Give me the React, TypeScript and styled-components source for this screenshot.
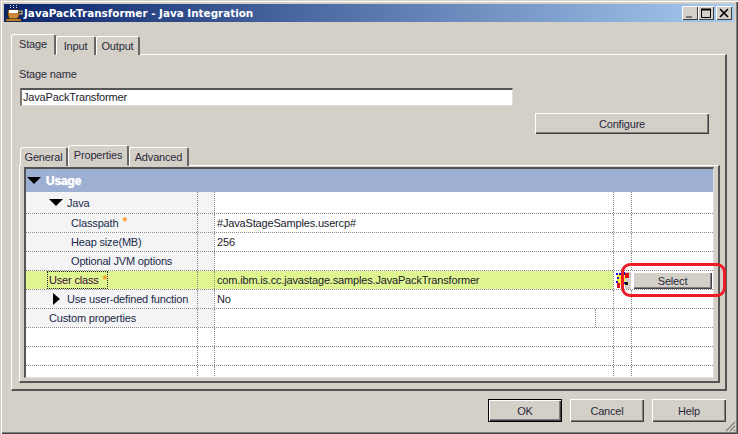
import React from 'react'
import styled, { createGlobalStyle } from 'styled-components'

const Global = createGlobalStyle`
  html, body { margin: 0; padding: 0; background: #d4d0c8; }
  * { box-sizing: border-box; }
`

const Window = styled.div`
  position: relative;
  width: 738px;
  height: 434px;
  overflow: hidden;
  display: flex;
  flex-direction: column;
  background: #d4d0c8;
  padding: 4px 4px 0 4px;
  box-shadow: inset 1px 1px 0 #d4d0c8, inset 2px 2px 0 #fff, inset -1px -1px 0 #404040, inset -2px -2px 0 #808080;
  font-family: 'Liberation Sans', Arial, sans-serif;
  font-size: 11px;
  letter-spacing: -0.17px;
  color: #1a1a2a;
`

const TitleBar = styled.div`
  height: 18px;
  flex: none;
  display: flex;
  align-items: center;
  padding: 0 2px 0 1px;
  background: linear-gradient(90deg, #0a246a, #a6caf0);
`

const Title = styled.div`
  margin-left: 1px;
  flex: 1;
  font-family: 'DejaVu Sans', sans-serif;
  font-size: 10.4px;
  font-weight: 700;
  letter-spacing: 0;
  color: #fff;
  white-space: nowrap;
`

const CaptionButton = styled.div<{ $gap?: number }>`
  width: 16px;
  height: 14px;
  margin-left: ${p => p.$gap ?? 0}px;
  background: #d4d0c8;
  box-shadow: inset 1px 1px 0 #fff, inset -1px -1px 0 #404040;
  display: flex;
  align-items: center;
  justify-content: center;
`

const Body = styled.div`
  flex: 1;
  display: flex;
  flex-direction: column;
  padding: 12px 7px 0 7px;
`

const TabStrip = styled.div<{ $left: number }>`
  display: flex;
  align-items: flex-end;
  padding-left: ${p => p.$left}px;
  position: relative;
  z-index: 1;
  margin-bottom: -1px;
`

const Tab = styled.div<{ $active?: boolean; $width: number }>`
  width: ${p => p.$width}px;
  height: ${p => (p.$active ? 21 : 19)}px;
  padding-top: 2px;
  text-align: center;
  line-height: 14px;
  background: #d4d0c8;
  border-top: 1px solid #fff;
  border-left: 1px solid #fff;
  border-right: 2px solid #666;
  border-radius: 3px 3px 0 0;
  border-bottom: ${p => (p.$active ? '1px solid #d4d0c8' : '0')};
  white-space: nowrap;
  color: #2a2a3a;
`

const Panel = styled.div`
  background: #d4d0c8;
  border-top: 1px solid #fff;
  border-left: 1px solid #fff;
  border-right: 2px solid #555;
  border-bottom: 2px solid #555;
`

const OuterPanel = styled(Panel)`
  height: 337px;
  display: flex;
  flex-direction: column;
  padding: 12px 0 0 7px;
`

const FieldLabel = styled.div`
  height: 14px;
  line-height: 14px;
  color: #2a2a3a;
`

const NameInput = styled.div`
  width: 493px;
  height: 18px;
  margin: 7px 0 0 1px;
  padding: 1px 0 0 1px;
  background: #fff;
  border-top: 2px solid #555;
  border-left: 2px solid #777;
  border-right: 1px solid #ddd;
  border-bottom: 1px solid #ddd;
  line-height: 13px;
  color: #1a1a2a;
`

const ConfigureRow = styled.div`
  display: flex;
  justify-content: flex-end;
  padding-right: 16px;
  margin-top: 7px;
  margin-bottom: 11px;
`

const PushButton = styled.div<{ $width: number; $height?: number; $default?: boolean }>`
  width: ${p => p.$width}px;
  height: ${p => p.$height ?? 23}px;
  display: flex;
  align-items: center;
  justify-content: center;
  background: #d4d0c8;
  color: #2a2a3a;
  border: ${p => (p.$default ? '1px solid #000' : '0')};
  box-shadow: inset 1px 1px 0 #fff, inset -1px -1px 0 #404040, inset -2px -2px 0 #808080;
`

const InnerPanel = styled(Panel)`
  height: 218px;
  margin-right: 5px;
  padding: 1px 4px 0 4px;
`

const Grid = styled.div`
  height: 211px;
  background: #fff;
  border-top: 2px solid #555;
  border-left: 2px solid #555;
  border-right: 1px solid #ddd;
  border-bottom: 1px solid #ddd;
  overflow: hidden;
`

const GroupHeader = styled.div`
  height: 23px;
  display: flex;
  align-items: center;
  padding-left: 1px;
  background: #9db0d3;
  color: #fff;
  font-weight: 700;
  font-size: 12px;
  text-shadow: 0 0 1px #fff;
`

const Row = styled.div<{ $height?: number; $open?: boolean }>`
  display: grid;
  grid-template-columns: 171px 17px 399px 18px 1fr;
  height: ${p => p.$height ?? 19}px;
  border-bottom: ${p => (p.$open ? '0' : '1px dotted #888')};
`

const NameCell = styled.div<{ $indent: number; $band?: string }>`
  display: flex;
  align-items: center;
  padding-left: ${p => p.$indent}px;
  background: ${p => p.$band ?? '#f4f4f4'};
  white-space: nowrap;
  color: #1a2a4a;
`

const GapCell = styled.div<{ $band?: string }>`
  border-left: 1px dotted #888;
  background: ${p => p.$band ?? '#f4f4f4'};
`

const ValueCell = styled.div<{ $band?: string }>`
  display: flex;
  align-items: center;
  padding-left: 2px;
  border-left: 1px dotted #888;
  background: ${p => p.$band ?? 'transparent'};
  white-space: nowrap;
  color: #1a1a2a;
`

const SplitValueCell = styled(ValueCell)`
  justify-content: flex-end;
  padding-right: 17px;
`

const InnerDivider = styled.div`
  width: 1px;
  height: 100%;
  border-left: 1px dotted #888;
`

const PlainCell = styled.div`
  border-left: 1px dotted #888;
`

const FocusLabel = styled.div`
  width: 61px;
  height: 100%;
  display: flex;
  align-items: center;
  padding-left: 1px;
  border: 1px dotted #222;
  color: #3a0a3a;
`

const Required = styled.span`
  color: #f59a20;
  font-size: 12px;
  font-weight: 700;
  margin-left: 4px;
  line-height: 1;
  align-self: flex-start;
  margin-top: 2px;
`

const ArrowDown = styled.span<{ $gap: number }>`
  width: 0;
  height: 0;
  border-left: 7px solid transparent;
  border-right: 7px solid transparent;
  border-top: 7px solid #000;
  margin-right: ${p => p.$gap}px;
`

const ArrowRight = styled.span`
  width: 0;
  height: 0;
  border-top: 6px solid transparent;
  border-bottom: 6px solid transparent;
  border-left: 7px solid #000;
  margin-right: 7px;
`

const SelectCell = styled.div`
  padding: 1px 0 0 2px;
  background: #fff;
`

const Footer = styled.div`
  display: flex;
  justify-content: flex-end;
  gap: 8px;
  margin-top: 8px;
  padding-right: 1px;
`

const Callout = styled.div`
  position: absolute;
  left: 621px;
  top: 263px;
  width: 105px;
  height: 34px;
  border: 3px solid #ed1c24;
  border-radius: 9px;
  pointer-events: none;
`

const Grip = styled.svg`
  position: absolute;
  right: 2px;
  bottom: 2px;
`

const WarnIcon = styled.svg`
  position: absolute;
  left: 616px;
  top: 271px;
`

const CoffeeIcon = () => (
  <svg width="18" height="18" viewBox="0 0 18 18">
    <path d="M5 1h1v1H5zM8 1h1v1H8zM11 1h1v1h-1zM5 3h1v1H5zM8 3h1v1H8zM11 3h1v1h-1z" fill="#ddd" />
    <path d="M3 6h11v6l-2 3H5l-2-3z" fill="#c88a3a" stroke="#5a3000" />
    <path d="M4 6h9v3H4z" fill="#fff" />
    <path d="M14 7h3v3h-3" fill="none" stroke="#e0c080" strokeWidth="1.2" />
    <path d="M1 15h15v2H1z" fill="#e0a040" stroke="#5a3000" strokeWidth="0.6" />
  </svg>
)

const BAND = '#dff590'

export default function App() {
  return (
    <Window>
      <Global />
      <TitleBar>
        <CoffeeIcon />
        <Title>JavaPackTransformer - Java Integration</Title>
        <CaptionButton>
          <svg width="10" height="10"><path d="M1 8h6v2H1z" fill="#777" /></svg>
        </CaptionButton>
        <CaptionButton>
          <svg width="10" height="10"><path d="M.5 1.5h9v8h-9zM0 1h10v1H0z" fill="none" stroke="#000" /></svg>
        </CaptionButton>
        <CaptionButton $gap={2}>
          <svg width="10" height="10"><path d="M1 1l8 8M9 1l-8 8" stroke="#000" strokeWidth="1.6" /></svg>
        </CaptionButton>
      </TitleBar>
      <Body>
        <TabStrip $left={0}>
          <Tab $active $width={45}>Stage</Tab>
          <Tab $width={40}>Input</Tab>
          <Tab $width={44}>Output</Tab>
        </TabStrip>
        <OuterPanel>
          <FieldLabel>Stage name</FieldLabel>
          <NameInput>JavaPackTransformer</NameInput>
          <ConfigureRow>
            <PushButton $width={174} $height={21}>Configure</PushButton>
          </ConfigureRow>
          <TabStrip $left={1}>
            <Tab $width={48}>General</Tab>
            <Tab $active $width={61}>Properties</Tab>
            <Tab $width={60}>Advanced</Tab>
          </TabStrip>
          <InnerPanel>
            <Grid>
              <GroupHeader><ArrowDown $gap={5} />Usage</GroupHeader>
              <Row $height={22}>
                <NameCell $indent={23}><ArrowDown $gap={4} />Java</NameCell>
                <GapCell /><ValueCell /><PlainCell /><PlainCell />
              </Row>
              <Row>
                <NameCell $indent={45}>Classpath<Required>*</Required></NameCell>
                <GapCell /><ValueCell>#JavaStageSamples.usercp#</ValueCell><PlainCell /><PlainCell />
              </Row>
              <Row>
                <NameCell $indent={45}>Heap size(MB)</NameCell>
                <GapCell /><ValueCell>256</ValueCell><PlainCell /><PlainCell />
              </Row>
              <Row>
                <NameCell $indent={45}>Optional JVM options</NameCell>
                <GapCell /><ValueCell /><PlainCell /><PlainCell />
              </Row>
              <Row>
                <NameCell $indent={21} $band={BAND}>
                  <FocusLabel>User class<Required>*</Required></FocusLabel>
                </NameCell>
                <GapCell $band={BAND} />
                <ValueCell $band={BAND}>com.ibm.is.cc.javastage.samples.JavaPackTransformer</ValueCell>
                <PlainCell />
                <SelectCell><PushButton $width={79} $height={17}>Select</PushButton></SelectCell>
              </Row>
              <Row>
                <NameCell $indent={27}><ArrowRight />Use user-defined function</NameCell>
                <GapCell /><ValueCell>No</ValueCell><PlainCell /><PlainCell />
              </Row>
              <Row>
                <NameCell $indent={23}>Custom properties</NameCell>
                <GapCell />
                <SplitValueCell><InnerDivider /></SplitValueCell>
                <PlainCell /><PlainCell />
              </Row>
              <Row><div /><PlainCell /><PlainCell /><PlainCell /><PlainCell /></Row>
              <Row><div /><PlainCell /><PlainCell /><PlainCell /><PlainCell /></Row>
              <Row><div /><PlainCell /><PlainCell /><PlainCell /><PlainCell /></Row>
              <Row $height={11} $open><div /><PlainCell /><PlainCell /><PlainCell /><PlainCell /></Row>
            </Grid>
          </InnerPanel>
        </OuterPanel>
        <Footer>
          <PushButton $width={74} $default>OK</PushButton>
          <PushButton $width={74}>Cancel</PushButton>
          <PushButton $width={74}>Help</PushButton>
        </Footer>
      </Body>
      <WarnIcon width="15" height="18" viewBox="0 0 15 18">
        <path d="M9 1h6v17H9z" fill="#d4d0c8" />
        <path d="M1 3h8v11H1z" fill="#ffee30" />
        <path d="M0 2h2v2H0zM3 2h2v2H3zM7 1h2v3H7zM1 6h2v2H1zM5 6h2v2H5zM0 10h2v2H0zM6 11h3v2H6z" fill="#1010d0" />
        <path d="M9 2h4v5H9zM1 12h3v5H1z" fill="#e01010" />
        <path d="M9 11h3v3H9z" fill="#111" />
      </WarnIcon>
      <Callout />
      <Grip width="12" height="12" viewBox="0 0 12 12">
        <path d="M11 2L2 11M11 6L6 11M11 10L10 11" stroke="#808080" strokeWidth="1.2" />
      </Grip>
    </Window>
  )
}
